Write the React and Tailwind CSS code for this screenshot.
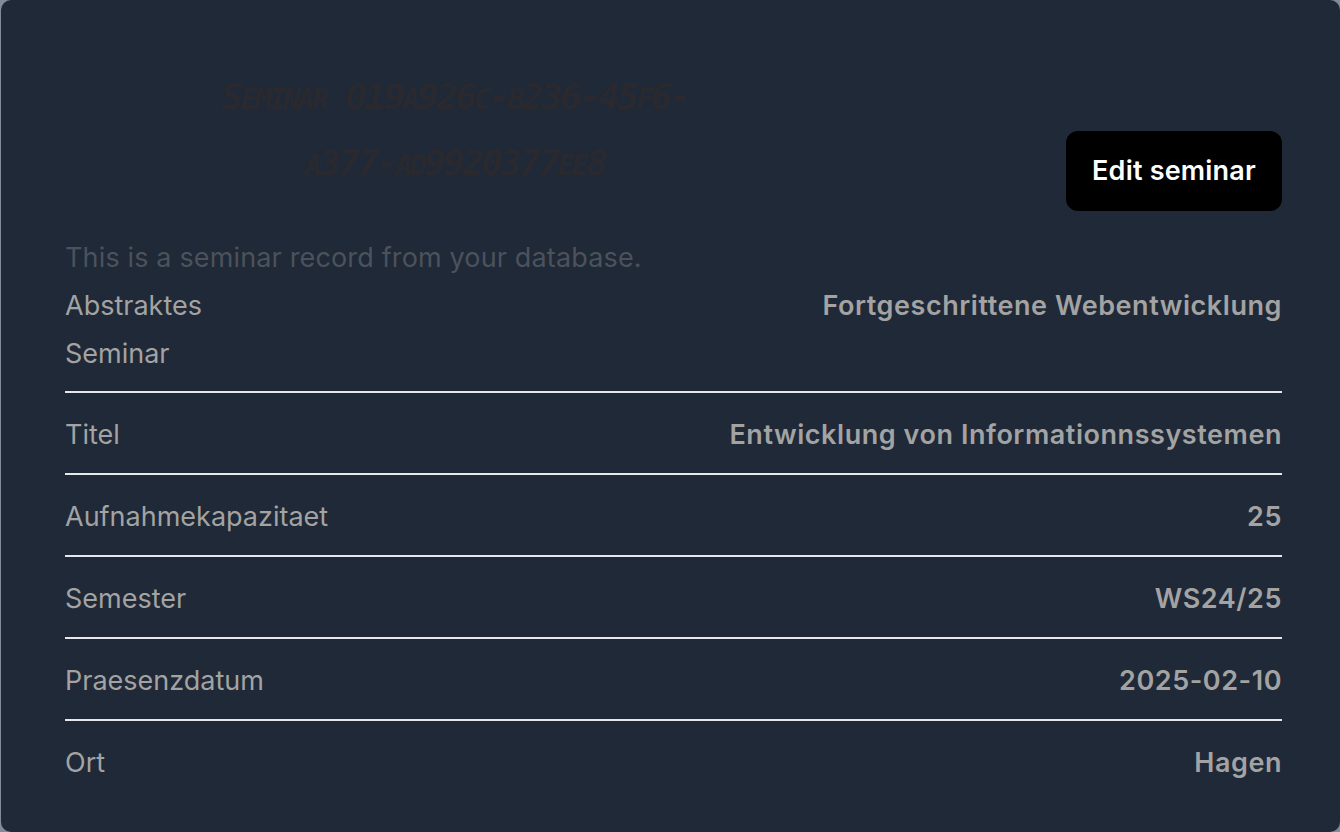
function SmallCaps({ text }) {
  const parts = text.match(/[a-z]+|[^a-z]+/g) || [];
  return parts.map((p, i) =>
    /^[a-z]+$/.test(p) ? (
      <span key={i} className="uppercase text-[0.78em]">
        {p}
      </span>
    ) : (
      <span key={i}>{p}</span>
    )
  );
}

export default function App() {
  const rows = [
    { label: "Titel", value: "Entwicklung von Informationnssystemen" },
    { label: "Aufnahmekapazitaet", value: "25" },
    { label: "Semester", value: "WS24/25" },
    { label: "Praesenzdatum", value: "2025-02-10" },
    { label: "Ort", value: "Hagen" },
  ];
  return (
    <div className="h-[832px] w-[1340px] bg-[#838b99] overflow-hidden">
      <div
        className="ml-[1px] h-[832px] w-[1339px] rounded-[10px] bg-[#1f2937] pl-[64px] pr-[58px] pt-[40px] text-[27px] leading-[48px] text-[#a3a3a3]"
        style={{ fontFamily: "Inter, 'Noto Sans', sans-serif" }}
      >
        <div className="flex items-start justify-between">
          <div className="flex w-[780px] justify-center pt-[25px]">
            <h1
              className="max-w-[520px] text-center text-[36px] font-bold italic leading-[63px] tracking-[-2.6px] text-[#29292f]"
              style={{ fontFamily: "'DejaVu Sans Mono', monospace" }}
            >
              <SmallCaps text="Seminar 019a926c-b236-45f6-a377-ad9920377ee8" />
            </h1>
          </div>
          <button className="mt-[91px] flex h-[80px] w-[216px] items-center justify-center rounded-[12px] bg-black text-[27px] font-semibold tracking-[0.2px] text-white">
            Edit seminar
          </button>
        </div>
        <p className="mt-[23px] tracking-[0.15px] text-[#4c525c]">This is a seminar record from your database.</p>
        <div className="flex items-start justify-between border-b-2 border-[#e5e7eb] pb-[13px]">
          <div>
            <div>Abstraktes</div>
            <div>Seminar</div>
          </div>
          <div className="font-semibold tracking-[0.55px]">Fortgeschrittene Webentwicklung</div>
        </div>
        {rows.map((r, i) => (
          <div
            key={r.value}
            className={
              "flex items-start justify-between pt-[18px] pb-[14px] " +
              (i < rows.length - 1 ? "border-b-2 border-[#e5e7eb]" : "")
            }
          >
            <div>{r.label}</div>
            <div className="font-semibold tracking-[0.55px]">{r.value}</div>
          </div>
        ))}
      </div>
    </div>
  );
}
